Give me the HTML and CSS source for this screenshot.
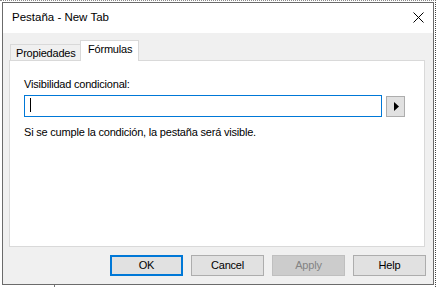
FILE: index.html
```html
<!DOCTYPE html>
<html lang="es">
<head>
<meta charset="utf-8">
<title>Pestaña - New Tab</title>
<link rel="stylesheet" href="styles.css">
</head>
<body>
<div class="window">
  <div class="titlebar">
    <span class="title">Pestaña - New Tab</span>
    <svg class="close" width="11" height="11" viewBox="0 0 11 11" aria-label="Cerrar"><path d="M0.5 0.5L10.5 10.5M10.5 0.5L0.5 10.5" stroke="#000" stroke-width="1" fill="none"/></svg>
  </div>
  <div class="client">
    <div class="tabs">
      <div class="tab">Propiedades</div>
      <div class="tab active">Fórmulas</div>
    </div>
    <div class="panel">
      <div class="label">Visibilidad condicional:</div>
      <div class="row">
        <div class="input"><span class="caret"></span></div>
        <button class="arrow" type="button"><svg width="5" height="9" viewBox="0 0 5 9"><polygon points="0,0 5,4.5 0,9" fill="#000"/></svg></button>
      </div>
      <div class="hint">Si se cumple la condición, la pestaña será visible.</div>
    </div>
    <div class="footer">
      <button class="btn default" type="button">OK</button>
      <button class="btn" type="button">Cancel</button>
      <button class="btn disabled" type="button">Apply</button>
      <button class="btn" type="button">Help</button>
    </div>
  </div>
</div>
<div class="stub"></div>
</body>
</html>
```
FILE: styles.css
```css
html, body {
  margin: 0;
}
body {
  width: 436px;
  height: 287px;
  overflow: hidden;
  box-sizing: border-box;
  background: #fff;
  border-top: 1px dotted #8a8a8a;
  border-right: 1px dotted #444;
  padding: 1px 0 0 2px;
  font-family: "Liberation Sans", Arial, sans-serif;
  font-size: 11px;
  letter-spacing: -0.2px;
  line-height: 13px;
  color: #000;
}
.window {
  width: 432px;
  height: 283px;
  box-sizing: border-box;
  border: 1px solid #6b6b6b;
  display: flex;
  flex-direction: column;
}
.titlebar {
  height: 30px;
  flex: none;
  box-sizing: border-box;
  background: #fff;
  display: flex;
  align-items: flex-start;
  justify-content: space-between;
  padding: 8px 9px 0 9px;
}
.title {
  font-size: 11.5px;
  letter-spacing: 0;
}
.close {
  display: block;
  margin-top: 1px;
}
.client {
  flex: 1;
  background: #f0f0f0;
  padding: 7px 8px 0 6px;
  display: flex;
  flex-direction: column;
}
.tabs {
  display: flex;
  align-items: flex-end;
  height: 20px;
  padding-left: 1px;
}
.tab {
  box-sizing: border-box;
  width: 71px;
  height: 16px;
  border: 1px solid #d9d9d9;
  border-bottom: none;
  padding: 2px 0 0 5px;
  white-space: nowrap;
}
.tab.active {
  width: 59px;
  height: 21px;
  margin-left: -1px;
  margin-bottom: -1px;
  padding-left: 7px;
  background: #fff;
  position: relative;
  z-index: 1;
}
.panel {
  box-sizing: border-box;
  height: 187px;
  border: 1px solid #d9d9d9;
  background: #fff;
  padding: 17px 14px 0 14px;
}
.row {
  display: flex;
  align-items: flex-start;
  gap: 4px;
  margin-top: 4px;
}
.input {
  box-sizing: border-box;
  width: 358px;
  height: 22px;
  border: 1px solid #0078d7;
  background: #fff;
}
.caret {
  display: block;
  width: 1px;
  height: 14px;
  margin: 2px 0 0 5px;
  background: #000;
}
.arrow {
  box-sizing: border-box;
  width: 19px;
  height: 21px;
  margin-top: 1px;
  padding: 0 0 0 2px;
  border: 1px solid #adadad;
  background: #e1e1e1;
  display: flex;
  align-items: center;
  justify-content: center;
}
.arrow svg {
  display: block;
}
.hint {
  margin-top: 9px;
}
.footer {
  display: flex;
  justify-content: flex-end;
  gap: 8px;
  margin-top: 8px;
  margin-right: -1px;
}
.btn {
  box-sizing: border-box;
  width: 73px;
  height: 21px;
  padding: 0;
  border: 1px solid #adadad;
  background: #e1e1e1;
  color: #000;
  font-family: inherit;
  font-size: inherit;
  letter-spacing: inherit;
  line-height: 13px;
}
.btn.default {
  border: 2px solid #0078d7;
}
.btn.disabled {
  background: #cccccc;
  border-color: #bfbfbf;
  color: #838383;
}
.stub {
  width: 0;
  height: 3px;
  margin-left: 52px;
  border-left: 1px solid #777;
}
```
